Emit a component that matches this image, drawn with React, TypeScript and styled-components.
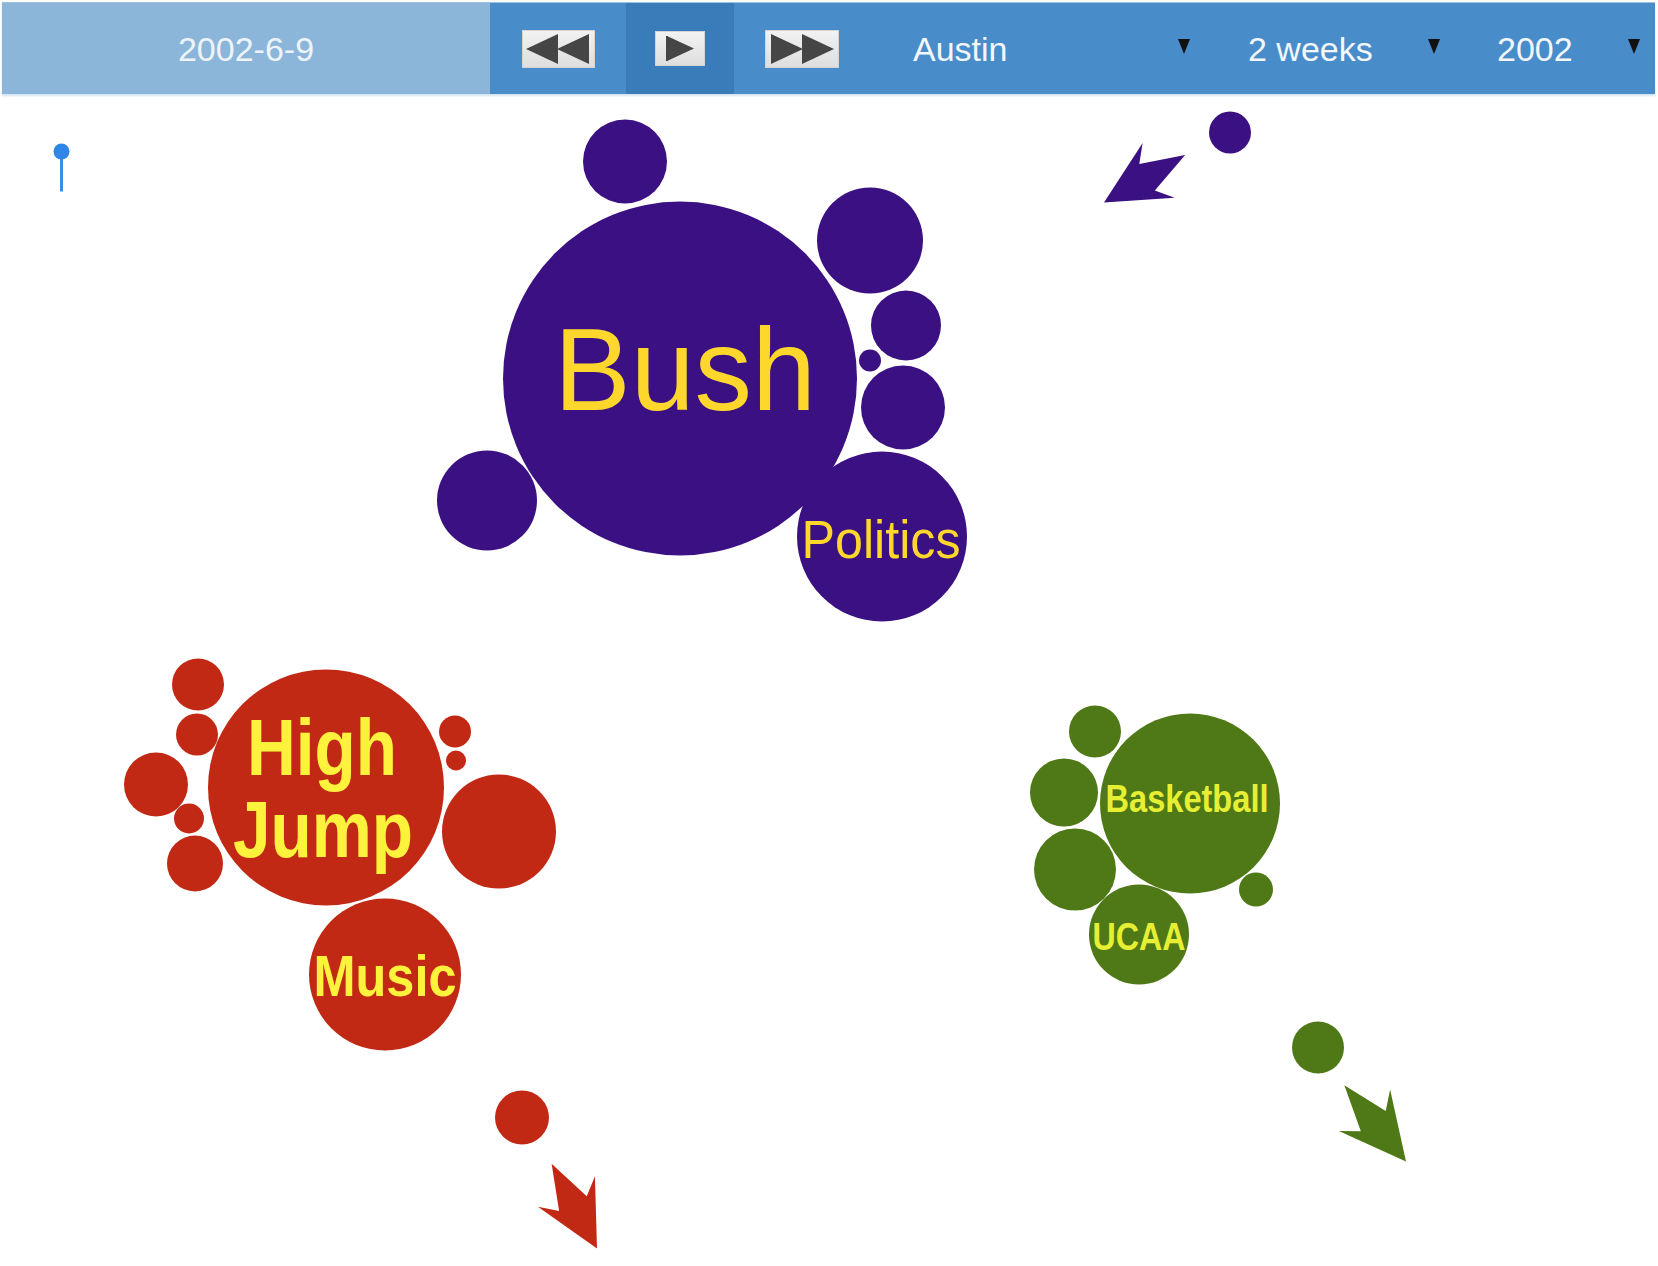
import styled, { createGlobalStyle } from "styled-components"

type Tone = "purple" | "red" | "green"

interface Bubble {
  cx: number
  cy: number
  r: number
}

interface Label {
  text: string
  x: number
  y: number
  size: number
  length: number
  bold?: boolean
}

interface Cluster {
  tone: Tone
  bubbles: Bubble[]
  labels: Label[]
  arrow: { x: number; y: number; angle: number; scale: number }
}

const fills: Record<Tone, string> = {
  purple: "#3b1082",
  red: "#c22915",
  green: "#4f7916",
}

const inks: Record<Tone, string> = {
  purple: "#fdd72b",
  red: "#fff23c",
  green: "#e6ef33",
}

const clusters: Cluster[] = [
  {
    tone: "purple",
    bubbles: [
      { cx: 680, cy: 379, r: 177 },
      { cx: 625, cy: 162, r: 42 },
      { cx: 870, cy: 241, r: 53 },
      { cx: 906, cy: 326, r: 35 },
      { cx: 870, cy: 361, r: 11 },
      { cx: 903, cy: 408, r: 42 },
      { cx: 487, cy: 501, r: 50 },
      { cx: 882, cy: 537, r: 85 },
      { cx: 1230, cy: 133, r: 21 },
    ],
    labels: [
      { text: "Bush", x: 685, y: 410, size: 116, length: 262 },
      { text: "Politics", x: 881, y: 558, size: 54, length: 159 },
    ],
    arrow: { x: 1104, y: 203, angle: 149.6, scale: 0.96 },
  },
  {
    tone: "red",
    bubbles: [
      { cx: 326, cy: 788, r: 118 },
      { cx: 198, cy: 685, r: 26 },
      { cx: 197, cy: 735, r: 21 },
      { cx: 156, cy: 785, r: 32 },
      { cx: 189, cy: 819, r: 15 },
      { cx: 195, cy: 864, r: 28 },
      { cx: 455, cy: 732, r: 16 },
      { cx: 456, cy: 761, r: 10 },
      { cx: 499, cy: 832, r: 57 },
      { cx: 385, cy: 975, r: 76 },
      { cx: 522, cy: 1118, r: 27 },
    ],
    labels: [
      { text: "High", x: 322, y: 775, size: 80, length: 150, bold: true },
      { text: "Jump", x: 323, y: 857, size: 80, length: 180, bold: true },
      { text: "Music", x: 385, y: 996, size: 58, length: 143, bold: true },
    ],
    arrow: { x: 597, y: 1249, angle: 61.8, scale: 0.98 },
  },
  {
    tone: "green",
    bubbles: [
      { cx: 1190, cy: 804, r: 90 },
      { cx: 1095, cy: 732, r: 26 },
      { cx: 1064, cy: 793, r: 34 },
      { cx: 1075, cy: 870, r: 41 },
      { cx: 1139, cy: 935, r: 50 },
      { cx: 1256, cy: 890, r: 17 },
      { cx: 1318, cy: 1048, r: 26 },
    ],
    labels: [
      { text: "Basketball", x: 1187, y: 812, size: 38, length: 163, bold: true },
      { text: "UCAA", x: 1139, y: 950, size: 38, length: 93, bold: true },
    ],
    arrow: { x: 1406, y: 1162, angle: 51, scale: 1 },
  },
]

// arrow head drawn with its tip at 0,0 pointing along +x
const arrowShape = "0,0 -66,33 -52,16 -98,0 -52,-16 -66,-33"

const GlobalStyle = createGlobalStyle`
  html, body {
    margin: 0;
    padding: 0;
    background: #ffffff;
    overflow: hidden;
  }

  body {
    font-family: "Liberation Sans", Arial, sans-serif;
  }
`

const Page = styled.div`
  width: 1658px;
  height: 1266px;
  display: flex;
  flex-direction: column;
`

const Toolbar = styled.div`
  display: flex;
  height: 91px;
  margin: 2px 3px 0 2px;
  background: #488dc9;
  border-top: 1px solid #9cc3e6;
  box-shadow: 0 2px 2px rgba(130, 170, 210, 0.35);
  color: #f3f6fa;
  font-size: 34px;
`

const DateCell = styled.div`
  width: 488px;
  display: flex;
  align-items: center;
  justify-content: center;
  background: #8bb6d9;
  color: #eef3f8;
  padding-top: 2px;
`

const ControlCell = styled.div<{ $width: number; $active?: boolean }>`
  width: ${(p) => p.$width}px;
  display: flex;
  align-items: center;
  justify-content: center;
  background: ${(p) => (p.$active ? "#3a7bb9" : "transparent")};
`

const ControlButton = styled.div<{ $width: number; $height: number }>`
  width: ${(p) => p.$width}px;
  height: ${(p) => p.$height}px;
  display: flex;
  align-items: center;
  justify-content: center;
  background: linear-gradient(#f2f2f2, #dedede);
  border: 1px solid #d4d4d4;
  box-sizing: border-box;
`

const Select = styled.div<{ $width: number; $left: number; $right: number }>`
  width: ${(p) => p.$width}px;
  padding: 2px ${(p) => p.$right}px 0 ${(p) => p.$left}px;
  box-sizing: border-box;
  display: flex;
  align-items: center;
  justify-content: space-between;
`

const Caret = styled.span`
  width: 0;
  height: 0;
  margin-top: -6px;
  border-left: 6px solid transparent;
  border-right: 6px solid transparent;
  border-top: 15px solid #111111;
`

const Canvas = styled.svg`
  display: block;
  flex: 1;
  width: 1658px;
`

const Bubble = styled.circle<{ $tone: Tone }>`
  fill: ${(p) => fills[p.$tone]};
`

const Arrow = styled.polygon<{ $tone: Tone }>`
  fill: ${(p) => fills[p.$tone]};
`

const BubbleLabel = styled.text<{ $tone: Tone; $bold?: boolean }>`
  fill: ${(p) => inks[p.$tone]};
  font-family: "Liberation Sans", Arial, sans-serif;
  font-weight: ${(p) => (p.$bold ? 700 : 400)};
  text-anchor: middle;
`

const Pin = styled.g`
  fill: #2f86e6;
  stroke: #3b8de8;
`

const ButtonGlyph = styled.svg`
  display: block;
  fill: #454545;
`

const Rewind = () => (
  <ButtonGlyph width="64" height="30" viewBox="0 0 64 30">
    <polygon points="0,15 32,0 32,30" />
    <polygon points="31,15 63,0 63,30" />
  </ButtonGlyph>
)

const Play = () => (
  <ButtonGlyph width="28" height="25" viewBox="0 0 28 25">
    <rect x="0" y="0" width="2" height="25" />
    <polygon points="1,0 28,12.5 1,25" />
  </ButtonGlyph>
)

const FastForward = () => (
  <ButtonGlyph width="64" height="30" viewBox="0 0 64 30">
    <polygon points="1,0 33,15 1,30" />
    <polygon points="32,0 64,15 32,30" />
  </ButtonGlyph>
)

const ClusterGroup: React.FC<{ cluster: Cluster }> = ({ cluster }) => {
  const { tone, bubbles, labels, arrow } = cluster

  return (
    <g>
      {bubbles.map((b, i) => (
        <Bubble key={i} $tone={tone} cx={b.cx} cy={b.cy} r={b.r} />
      ))}
      {labels.map((l) => (
        <BubbleLabel
          key={l.text}
          $tone={tone}
          $bold={l.bold}
          x={l.x}
          y={l.y}
          fontSize={l.size}
          textLength={l.length}
          lengthAdjust="spacingAndGlyphs"
        >
          {l.text}
        </BubbleLabel>
      ))}
      <Arrow
        $tone={tone}
        points={arrowShape}
        transform={`translate(${arrow.x} ${arrow.y}) rotate(${arrow.angle}) scale(${arrow.scale})`}
      />
    </g>
  )
}

const App = () => {
  return (
    <Page>
      <GlobalStyle />

      <Toolbar>
        <DateCell>2002-6-9</DateCell>

        <ControlCell $width={136}>
          <ControlButton $width={73} $height={38}>
            <Rewind />
          </ControlButton>
        </ControlCell>

        <ControlCell $width={108} $active>
          <ControlButton $width={50} $height={35}>
            <Play />
          </ControlButton>
        </ControlCell>

        <ControlCell $width={136}>
          <ControlButton $width={74} $height={38}>
            <FastForward />
          </ControlButton>
        </ControlCell>

        <Select $width={345} $left={43} $right={25}>
          Austin
          <Caret />
        </Select>

        <Select $width={245} $left={33} $right={20}>
          2 weeks
          <Caret />
        </Select>

        <Select $width={195} $left={37} $right={15}>
          2002
          <Caret />
        </Select>
      </Toolbar>

      <Canvas viewBox="0 95 1658 1171" height="1171">
        <Pin>
          <line x1="61.5" y1="152" x2="61.5" y2="192" strokeWidth="3" />
          <circle cx="61.5" cy="152" r="8" stroke="none" />
        </Pin>

        {clusters.map((c) => (
          <ClusterGroup key={c.tone} cluster={c} />
        ))}
      </Canvas>
    </Page>
  )
}

export default App
